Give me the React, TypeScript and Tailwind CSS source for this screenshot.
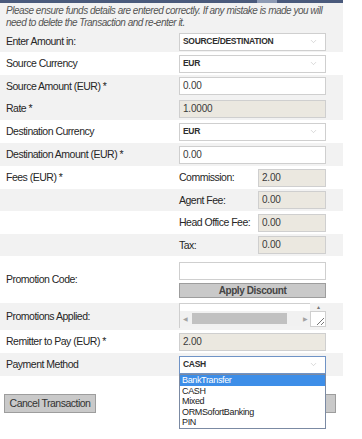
import React from 'react';
import { ChevronDown } from 'lucide-react';

const GRAY = 'bg-[#f2f2f2]';
const WHITE = 'bg-white';

function Select({ value, focused }: { value: string; focused?: boolean }) {
  return (
    <div
      className={`flex items-center justify-between h-[18px] w-[147px] bg-white border ${
        focused ? 'border-[#6f93c6]' : 'border-[#cfcfcf]'
      } pl-[3px] pr-[7px] text-[8.5px] font-bold text-[#2e2e2e] tracking-[-0.3px]`}
    >
      <span>{value}</span>
      <ChevronDown size={9} strokeWidth={1.25} className="text-[#b0b0b0]" />
    </div>
  );
}

function Input({ value, readOnly, w = 'w-[147px]' }: { value: string; readOnly?: boolean; w?: string }) {
  return (
    <div
      className={`flex items-center h-[18px] ${w} border border-[#cfcfcf] pl-[3px] text-[10px] tracking-[-0.2px] text-[#3a3a3a] ${
        readOnly ? 'bg-[#ebe8e0]' : 'bg-white'
      }`}
    >
      {value}
    </div>
  );
}

function Row({ label, bg, h, children }: { label: string; bg: string; h: string; children?: React.ReactNode }) {
  return (
    <div className={`flex items-center ${bg} ${h}`}>
      <div className="w-[179px] pl-[6px] text-[#262626] whitespace-nowrap">{label}</div>
      <div className="w-[147px]">{children}</div>
    </div>
  );
}

function FeeRow({ label, sub, value, bg, h }: { label: string; sub: string; value: string; bg: string; h: string }) {
  return (
    <Row label={label} bg={bg} h={h}>
      <div className="flex items-center">
        <div className="w-[79px] text-[#262626] whitespace-nowrap">{sub}</div>
        <Input value={value} readOnly w="w-[68px]" />
      </div>
    </Row>
  );
}

export default function App() {
  const options = ['BankTransfer', 'CASH', 'Mixed', 'ORMSofortBanking', 'PIN'];

  return (
    <div
      className="relative w-[362px] h-[439px] overflow-hidden bg-white text-[10.5px] tracking-[-0.5px] leading-none"
      style={{ fontFamily: '"Liberation Sans", Arial, sans-serif' }}
    >
      <div className="w-[343px]">
        {/* top strip */}
        <div className="flex h-[3px]">
          <div className="w-[257px] bg-[#4a5a7c]" />
          <div className="w-[20px] bg-[#8e9bb4]" />
          <div className="flex-1 bg-[#4a5a7c]" />
        </div>

        {/* notice */}
        <div className={`${GRAY} h-[28px] pl-[6px] pt-[2px] italic text-[#555] leading-[12px] text-[10px] tracking-[-0.5px] whitespace-nowrap`}>
          Please ensure funds details are entered correctly. If any mistake is made you will
          <br />
          need to delete the Transaction and re-enter it.
        </div>

        <Row label="Enter Amount in:" bg={GRAY} h="h-[21px]">
          <Select value="SOURCE/DESTINATION" />
        </Row>
        <Row label="Source Currency" bg={WHITE} h="h-[23px]">
          <Select value="EUR" />
        </Row>
        <Row label="Source Amount (EUR) *" bg={GRAY} h="h-[22px]">
          <Input value="0.00" />
        </Row>
        <Row label="Rate *" bg={GRAY} h="h-[23px]">
          <Input value="1.0000" readOnly />
        </Row>
        <Row label="Destination Currency" bg={WHITE} h="h-[23px]">
          <Select value="EUR" />
        </Row>
        <Row label="Destination Amount (EUR) *" bg={GRAY} h="h-[23px]">
          <Input value="0.00" />
        </Row>
        <FeeRow label="Fees (EUR) *" sub="Commission:" value="2.00" bg={WHITE} h="h-[23px]" />
        <FeeRow label="" sub="Agent Fee:" value="0.00" bg={GRAY} h="h-[22px]" />
        <FeeRow label="" sub="Head Office Fee:" value="0.00" bg={WHITE} h="h-[23px]" />
        <FeeRow label="" sub="Tax:" value="0.00" bg={GRAY} h="h-[22px]" />

        <Row label="Promotion Code:" bg={WHITE} h="h-[47px]">
          <div className="flex flex-col gap-[3px] pt-[1px]">
            <Input value="" />
            <button className="h-[15px] w-[147px] bg-[#c9c9c9] border border-[#9d9d9d] font-bold text-[10px] tracking-[-0.4px] text-[#444] leading-none">
              Apply Discount
            </button>
          </div>
        </Row>

        <Row label="Promotions Applied:" bg={GRAY} h="h-[27px]">
          <div className="flex h-[25px] mt-[-2px]">
            <div className="w-[131px] flex flex-col border-l border-t border-[#cfcfcf]">
              <div className="h-[7px] bg-white" />
              <div className="flex items-center h-[15px] bg-[#f1f1f1] px-[3px] gap-[4px]">
                <span className="text-[6px] text-[#a3a3a3]">◀</span>
                <div className="h-[11px] w-[95px] bg-[#c1c1c1]" />
                <span className="ml-auto text-[6px] text-[#a3a3a3]">▶</span>
              </div>
            </div>
            <div className="w-[16px] flex flex-col items-center">
              <span className="h-[8px] text-[6px] leading-[8px] text-[#777]">▴</span>
              <div className="w-[16px] h-[16px] bg-white border border-[#cfcfcf] relative">
                <svg width="14" height="14" viewBox="0 0 14 14" className="absolute left-0 top-0">
                  <path d="M13 6 L6 13 M13 10 L10 13" stroke="#777" strokeWidth="1" />
                </svg>
              </div>
            </div>
          </div>
        </Row>

        <Row label="Remitter to Pay (EUR) *" bg={WHITE} h="h-[23px]">
          <Input value="2.00" readOnly />
        </Row>
        <Row label="Payment Method" bg={GRAY} h="h-[23px]">
          <Select value="CASH" focused />
        </Row>
      </div>

      {/* buttons */}
      <div className="flex justify-between w-[336px] pt-[18px] pl-[4px]">
        <button className="h-[19px] w-[92px] bg-[#c9c9c9] border border-[#9d9d9d] text-[10.5px] tracking-[-0.5px] text-[#333] leading-none whitespace-nowrap">
          Cancel Transaction
        </button>
        <button className="h-[19px] w-[80px] bg-[#c9c9c9] border border-[#9d9d9d] text-[10.5px] tracking-[-0.5px] text-[#333] leading-none whitespace-nowrap">
          Proceed
        </button>
      </div>

      {/* open dropdown */}
      <div className="absolute left-[179px] top-[374px] w-[147px] bg-white border border-[#7b8aa3] text-[9px] tracking-[-0.35px] text-[#222] leading-[10.5px]">
        {options.map((o, i) => (
          <div key={o} className={`h-[10.5px] pl-[2px] ${i === 0 ? 'bg-[#3d8ee8] text-white' : ''}`}>
            {o}
          </div>
        ))}
      </div>
    </div>
  );
}
